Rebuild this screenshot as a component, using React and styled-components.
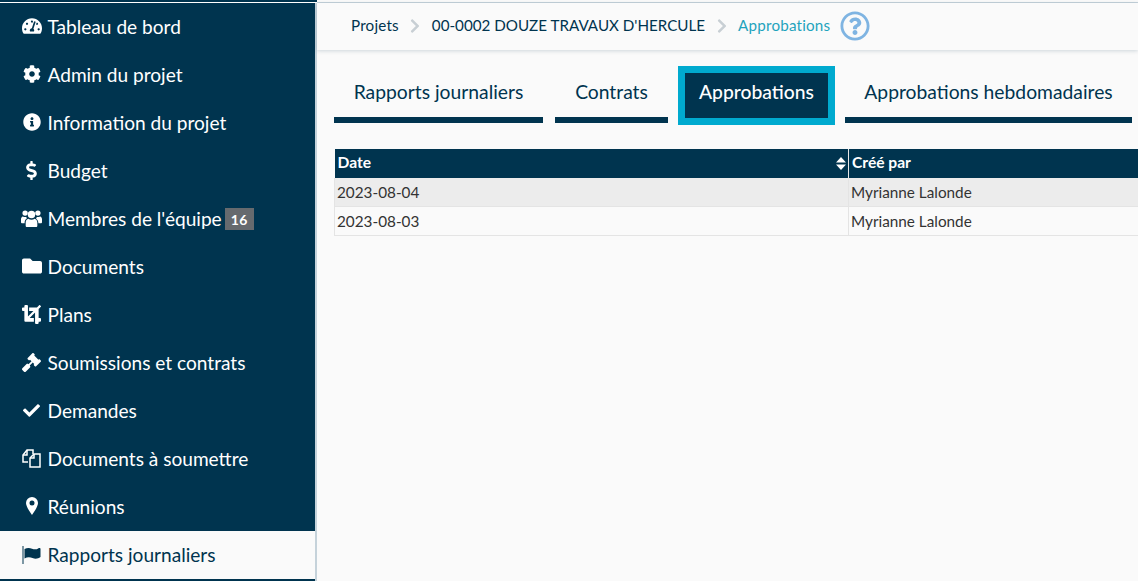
import React from 'react';
import styled, { createGlobalStyle } from 'styled-components';
import {
  FaTachometerAlt,
  FaCog,
  FaInfoCircle,
  FaDollarSign,
  FaFolder,
  FaCrop,
  FaGavel,
  FaCheck,
  FaChevronRight,
  FaRegQuestionCircle,
} from 'react-icons/fa';

const navy = '#00344f';

const GlobalStyle = createGlobalStyle`
  html, body {
    margin: 0;
    height: 100%;
    overflow: hidden;
    background: #fafafa;
    font-family: Lato, "Open Sans", sans-serif;
  }
`;

const Page = styled.div`
  display: flex;
  width: 1138px;
  height: 581px;
  overflow: hidden;
`;

const Sidebar = styled.nav`
  flex: 0 0 315px;
  height: 578px;
  margin-top: 3px;
  background: ${navy};
  border-right: 2px solid #c5d2da;
  box-shadow: 0 -1px 0 #fff, 0 -3px 0 ${navy};
  overflow: hidden;
`;

const NavItem = styled.a`
  box-sizing: border-box;
  display: flex;
  align-items: center;
  height: 48px;
  padding: 0 0 2px 21px;
  font-size: 19.1px;
  color: ${(p) => (p.$active ? navy : '#fff')};
  background: ${(p) => (p.$active ? '#fafafa' : 'transparent')};
`;

const NavIcon = styled.span`
  display: flex;
  justify-content: center;
  align-items: center;
  width: 21px;
  margin-right: 5.500px;
  font-size: ${(p) => p.$size || 19}px;
`;

const Badge = styled.span`
  margin: 2px 0 0 3px;
  padding: 0 6px;
  height: 22px;
  line-height: 23px;
  font-size: 14px;
  font-weight: 700;
  letter-spacing: 0.5px;
  color: #fff;
  background: #666a6e;
`;

const Main = styled.main`
  flex: 1;
  min-width: 0;
  background: #fafafa;
`;

const Breadcrumb = styled.header`
  box-sizing: border-box;
  display: flex;
  align-items: center;
  height: 47px;
  margin-top: 3px;
  padding: 0 0 3px 34px;
  font-size: 15.2px;
  color: ${navy};
  box-shadow: 0 1px 4px rgba(0, 52, 79, 0.18), 0 -1px 0 #c5d2da;
`;

const Crumb = styled.span`
  color: ${(p) => (p.$current ? '#1fa3bd' : navy)};
  letter-spacing: ${(p) => (p.$spaced ? 0.2 : 0)}px;
`;

const Sep = styled.span`
  display: flex;
  margin: 1px 8.500px 0;
  font-size: 16px;
  color: #c8cfd4;
`;

const Help = styled.span`
  display: flex;
  margin: 2px 0 0 10px;
  font-size: 30px;
  color: #7fb4e2;
`;

const Tabs = styled.div`
  display: flex;
  align-items: flex-start;
  gap: 12px;
  margin: 16px 0 0 17px;
`;

const Tab = styled.button`
  box-sizing: border-box;
  width: ${(p) => p.$width}px;
  height: ${(p) => (p.$active ? 59 : 57)}px;
  margin-left: ${(p) => (p.$active ? -2 : 0)}px;
  margin-right: ${(p) => (p.$active ? -2 : 0)}px;
  padding: 0 0 ${(p) => (p.$active ? 8 : 1)}px;
  font: inherit;
  font-size: 19.3px;
  font-weight: ${(p) => (p.$active ? 500 : 400)};
  color: ${(p) => (p.$active ? '#fff' : navy)};
  background: ${(p) => (p.$active ? navy : 'transparent')};
  border: ${(p) => (p.$active ? '7px solid #00aacf' : '0')};
  border-bottom: ${(p) => (p.$active ? '7px solid #00aacf' : `6px solid ${navy}`)};
`;

const Table = styled.table`
  width: 806px;
  margin: 24px 0 0 17px;
  border-collapse: collapse;
  table-layout: fixed;
  font-size: 15.3px;
  color: #333;
`;

const Th = styled.th`
  position: relative;
  height: 26px;
  padding: 0 2px 3px 3px;
  text-align: left;
  font-size: 15.6px;
  font-weight: 700;
  color: #fff;
  background: ${navy};
  border-left: ${(p) => (p.$divider ? '1px solid #e8e8e8' : '0')};
`;

const SortIcon = styled.svg`
  position: absolute;
  right: 2px;
  top: 8px;
  width: 10px;
  height: 13px;
`;

const Td = styled.td`
  height: 28px;
  padding: 0 2px;
  background: ${(p) => (p.$odd ? '#ececec' : '#fafafa')};
  border: 1px solid #e4e4e4;
  border-top: 0;
`;

// icons the package draws too differently from the reference
const UsersIcon = () => (
  <svg width="22" height="19" viewBox="0 0 22 19" fill="currentColor">
    <circle cx="4.300" cy="3.800" r="2.800" />
    <circle cx="17.700" cy="3.800" r="2.800" />
    <circle cx="11" cy="5.400" r="3.900" />
    <path d="M5.800 18.500c-.5-.2-.9-.8-.9-1.500v-3.200c0-2 1.200-3.700 2.800-4 1.900 1.300 4.700 1.300 6.600 0 1.600.3 2.800 2 2.800 4V17c0 .8-.5 1.500-1.300 1.500z" />
    <path d="M3.800 14.500H.9c-.5 0-.9-.4-.9-1v-3.200c0-1.500.8-2.800 2-3 1 .7 2.300.9 3.400.5C5.700 8 6 9 6.300 9.200 4.800 10 3.800 11.800 3.800 13.800z" />
    <path d="M18.200 14.500h2.900c.5 0 .9-.4.900-1v-3.200c0-1.500-.8-2.800-2-3-1 .7-2.300.9-3.400.5-.3.7-.6 1.700-.9 1.900 1.500.8 2.500 2.600 2.500 4.600z" />
  </svg>
);

const CopyIcon = () => (
  <svg width="19" height="19" viewBox="0 0 19 19" fill="none" stroke="currentColor" strokeWidth="1.500">
    <path d="M6 13H1V6l4-5h6v4" />
    <path d="M1 6h4V1" />
    <path d="M8 18V9l4-4h6v13z" />
    <path d="M8 9h4V5" />
  </svg>
);

const MarkerIcon = () => (
  <svg width="12" height="18" viewBox="0 0 12 18" fill="currentColor">
    <path
      fillRule="evenodd"
      d="M6 0a6 6 0 0 1 6 6c0 3.500-4 9-6 12C4 15 0 9.500 0 6a6 6 0 0 1 6-6zm0 3.500a2.500 2.500 0 1 0 0 5 2.500 2.500 0 0 0 0-5z"
    />
  </svg>
);

const FlagIcon = () => (
  <svg width="19" height="19" viewBox="0 0 19 19" fill="currentColor">
    <path d="M.5 1h1v18h-1z" />
    <path d="M2.500 4c2.800-1.500 5.300-1.200 7.500-.3s4.500 1 6.500-.5c.8-.5 2-.3 2 .5v8.300c-2.500 2-5.500 2-8 1s-5.500-1-8 .5z" />
  </svg>
);

const navItems = [
  { icon: <FaTachometerAlt />, size: 20, label: 'Tableau de bord' },
  { icon: <FaCog />, size: 18, label: 'Admin du projet' },
  { icon: <FaInfoCircle />, size: 18, label: 'Information du projet' },
  { icon: <FaDollarSign />, label: 'Budget' },
  { icon: <UsersIcon />, label: "Membres de l'équipe", badge: 16 },
  { icon: <FaFolder />, size: 20, label: 'Documents' },
  { icon: <FaCrop />, label: 'Plans' },
  { icon: <FaGavel />, label: 'Soumissions et contrats' },
  { icon: <FaCheck />, size: 17, label: 'Demandes' },
  { icon: <CopyIcon />, label: 'Documents à soumettre' },
  { icon: <MarkerIcon />, label: 'Réunions' },
  { icon: <FlagIcon />, label: 'Rapports journaliers', active: true },
];

const tabs = [
  { label: 'Rapports journaliers', width: 209 },
  { label: 'Contrats', width: 113 },
  { label: 'Approbations', width: 157, active: true },
  { label: 'Approbations hebdomadaires', width: 287 },
];

const rows = [
  { date: '2023-08-04', author: 'Myrianne Lalonde' },
  { date: '2023-08-03', author: 'Myrianne Lalonde' },
];

const App = () => {
  return (
    <>
      <GlobalStyle />
      <Page>
        <Sidebar>
          {navItems.map((item) => (
            <NavItem key={item.label} $active={item.active}>
              <NavIcon $size={item.size}>{item.icon}</NavIcon>
              {item.label}
              {item.badge && <Badge>{item.badge}</Badge>}
            </NavItem>
          ))}
        </Sidebar>
        <Main>
          <Breadcrumb>
            <Crumb $spaced>Projets</Crumb>
            <Sep>
              <FaChevronRight />
            </Sep>
            <Crumb>00-0002 DOUZE TRAVAUX D'HERCULE</Crumb>
            <Sep>
              <FaChevronRight />
            </Sep>
            <Crumb $current $spaced>
              Approbations
            </Crumb>
            <Help>
              <FaRegQuestionCircle />
            </Help>
          </Breadcrumb>
          <Tabs>
            {tabs.map((tab) => (
              <Tab key={tab.label} $width={tab.width} $active={tab.active}>
                {tab.label}
              </Tab>
            ))}
          </Tabs>
          <Table>
            <colgroup>
              <col width="514" />
              <col />
            </colgroup>
            <thead>
              <tr>
                <Th>
                  Date
                  <SortIcon viewBox="0 0 10 13">
                    <path d="M5 0l5 5.500H0z M5 13l5-5.500H0z" fill="#fff" />
                  </SortIcon>
                </Th>
                <Th $divider>Créé par</Th>
              </tr>
            </thead>
            <tbody>
              {rows.map((row, i) => (
                <tr key={row.date}>
                  <Td $odd={i === 0}>{row.date}</Td>
                  <Td $odd={i === 0}>{row.author}</Td>
                </tr>
              ))}
            </tbody>
          </Table>
        </Main>
      </Page>
    </>
  );
};

export default App;
